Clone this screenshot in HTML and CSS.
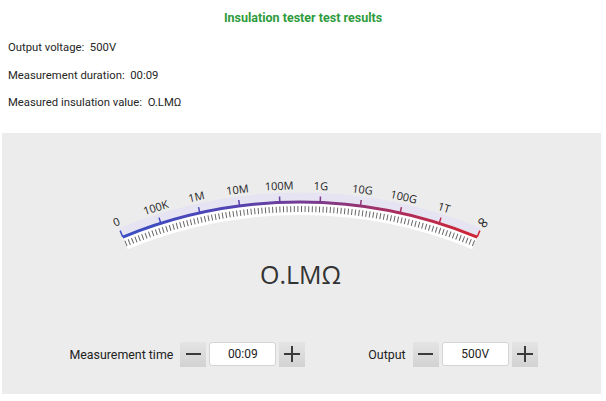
FILE: index.html
```html
<!DOCTYPE html>
<html>
<head>
<meta charset="utf-8">
<link rel="stylesheet" href="styles.css">
</head>
<body>
<div class="title">Insulation tester test results</div>
<div class="info">
  <p>Output voltage:&nbsp;&nbsp;500V</p>
  <p>Measurement duration:&nbsp;&nbsp;00:09</p>
  <p>Measured insulation value:&nbsp;&nbsp;O.LMΩ</p>
</div>
<div class="panel">
  <svg class="gauge" width="400" height="85" viewBox="100 170 400 85">
    <defs>
      <linearGradient id="g" gradientUnits="userSpaceOnUse" x1="123" y1="0" x2="477" y2="0">
        <stop offset="0" stop-color="#3a4fc4"/>
        <stop offset="0.3" stop-color="#5143b3"/>
        <stop offset="0.55" stop-color="#7c3a8c"/>
        <stop offset="0.8" stop-color="#b02d58"/>
        <stop offset="1" stop-color="#d02634"/>
      </linearGradient>
    </defs>
    <path d="M120.9 231.5 A470 470 0 0 1 479.1 231.5" fill="none" stroke="#e6e4f2" stroke-width="9"/>
    <path d="M125.5 242.6 A458 458 0 0 1 474.5 242.6" fill="none" stroke="#ffffff" stroke-width="12"/>
    <path d="M125.5 242.6 A458 458 0 0 1 474.5 242.6" fill="none" stroke="#666" stroke-width="6" stroke-dasharray="1 2.6"/>
    <path d="M122.8 236.1 A465 465 0 0 1 477.2 236.1" fill="none" stroke="url(#g)" stroke-width="3"/>
    <g stroke-width="1.5">
      <line x1="300" y1="201" x2="300" y2="194" stroke="#3a4fc4" transform="rotate(-22.4 300 666)"/>
      <line x1="300" y1="201" x2="300" y2="195" stroke="#4049bd" transform="rotate(-17.42 300 666)"/>
      <line x1="300" y1="201" x2="300" y2="195" stroke="#4a46b8" transform="rotate(-12.44 300 666)"/>
      <line x1="300" y1="201" x2="300" y2="195" stroke="#5a42ab" transform="rotate(-7.47 300 666)"/>
      <line x1="300" y1="201" x2="300" y2="195" stroke="#6a3e9c" transform="rotate(-2.49 300 666)"/>
      <line x1="300" y1="201" x2="300" y2="195" stroke="#7c3a8c" transform="rotate(2.49 300 666)"/>
      <line x1="300" y1="201" x2="300" y2="195" stroke="#8f3578" transform="rotate(7.47 300 666)"/>
      <line x1="300" y1="201" x2="300" y2="195" stroke="#a53063" transform="rotate(12.44 300 666)"/>
      <line x1="300" y1="201" x2="300" y2="195" stroke="#bb2b4c" transform="rotate(17.42 300 666)"/>
      <line x1="300" y1="201" x2="300" y2="194" stroke="#cf2636" transform="rotate(22.4 300 666)"/>
    </g>
    <g class="lbl" text-anchor="middle" dominant-baseline="central">
      <text x="300" y="184" transform="rotate(-22.4 300 666)">0</text>
      <text x="300" y="184" transform="rotate(-17.42 300 666)">100K</text>
      <text x="300" y="184" transform="rotate(-12.44 300 666)">1M</text>
      <text x="300" y="184" transform="rotate(-7.47 300 666)">10M</text>
      <text x="300" y="184" transform="rotate(-2.49 300 666)">100M</text>
      <text x="300" y="184" transform="rotate(2.49 300 666)">1G</text>
      <text x="300" y="184" transform="rotate(7.47 300 666)">10G</text>
      <text x="300" y="184" transform="rotate(12.44 300 666)">100G</text>
      <text x="300" y="184" transform="rotate(17.42 300 666)">1T</text>
      <g transform="rotate(22.4 300 666)">
        <text class="inf" x="300" y="185" transform="rotate(22 300 185)">∞</text>
      </g>
    </g>
  </svg>
  <div class="value">O.LMΩ</div>
  <div class="controls">
    <div class="group">
      <span class="label">Measurement time</span>
      <div class="stepper">
        <button class="btn"><span class="minus"></span></button>
        <div class="field">00:09</div>
        <button class="btn"><span class="plus"></span></button>
      </div>
    </div>
    <div class="group">
      <span class="label">Output</span>
      <div class="stepper">
        <button class="btn"><span class="minus"></span></button>
        <div class="field">500V</div>
        <button class="btn"><span class="plus"></span></button>
      </div>
    </div>
  </div>
</div>
</body>
</html>
```

FILE: styles.css
```css
* { box-sizing: border-box; }
html, body { margin: 0; padding: 0; background: #fff; }
body {
  font-family: Roboto, "Liberation Sans", sans-serif;
  color: #262626;
  width: 606px;
  height: 401px;
  overflow: hidden;
}
.title {
  height: 34px;
  line-height: 35px;
  text-align: center;
  color: #2e9b3c;
  font-weight: bold;
  font-size: 12.5px;
}
.info p {
  margin: 0;
  padding-left: 8px;
  height: 27.5px;
  line-height: 27px;
  font-size: 11.3px;
}
.panel {
  margin: 16px 0 0 2px;
  width: 599px;
  height: 261px;
  background: #ececec;
  overflow: hidden;
}
.gauge {
  display: block;
  margin: 38px 0 0 98px;
}
.lbl {
  font-family: "Open Sans", "Noto Sans", sans-serif;
  font-size: 11px;
  fill: #222;
}
.lbl .inf {
  font-family: "DejaVu Sans", sans-serif;
  font-size: 16px;
}
.value {
  margin-top: 3px;
  height: 30px;
  line-height: 30px;
  text-align: center;
  font-family: "Open Sans", "Noto Sans", sans-serif;
  font-size: 25px;
  color: #333;
  padding-right: 2px;
}
.controls {
  margin-top: 53px;
  display: flex;
  justify-content: center;
  gap: 63px;
  padding-left: 4px;
}
.group {
  display: flex;
  align-items: center;
  gap: 7px;
}
.label {
  font-size: 12.4px;
  color: #222;
}
.stepper {
  display: flex;
  align-items: center;
  gap: 3px;
}
.btn {
  width: 26px;
  height: 25px;
  border: none;
  padding: 0;
  background: linear-gradient(#e4e4e4, #d2d2d2);
  display: flex;
  align-items: center;
  justify-content: center;
  position: relative;
}
.minus {
  width: 15px;
  height: 2px;
  background: #3a3a3a;
}
.plus {
  width: 16px;
  height: 16px;
  position: relative;
}
.plus::before, .plus::after {
  content: "";
  position: absolute;
  background: #3a3a3a;
}
.plus::before { left: 0; top: 7px; width: 16px; height: 2px; }
.plus::after { left: 7px; top: 0; width: 2px; height: 16px; }
.field {
  width: 67px;
  height: 24px;
  background: #fff;
  border: 1px solid #d4d4d4;
  border-radius: 3px;
  text-align: center;
  line-height: 22px;
  font-size: 12px;
  color: #222;
}
```
